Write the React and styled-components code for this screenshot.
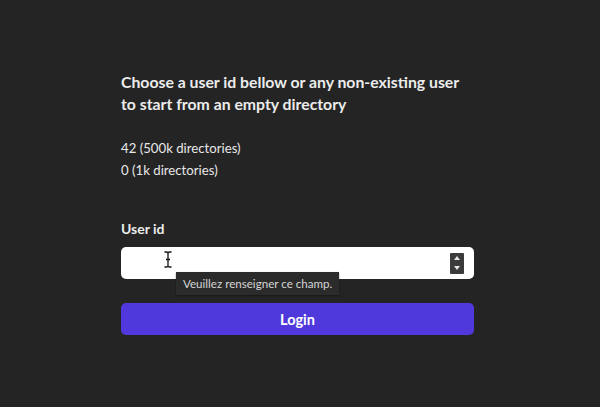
import React from "react";
import styled, { createGlobalStyle } from "styled-components";

const Global = createGlobalStyle`
  html, body {
    margin: 0;
    padding: 0;
    background: #242424;
  }
  body {
    font-family: Lato, "Noto Sans", sans-serif;
    color: #e6e6e6;
  }
`;

const Page = styled.div`
  width: 600px;
  height: 407px;
  overflow: hidden;
  background: #242424;
  padding-top: 71px;
  box-sizing: border-box;
`;

const Panel = styled.div`
  width: 353px;
  margin-left: 121px;
  display: flex;
  flex-direction: column;
`;

const Title = styled.h2`
  margin: 0;
  font-size: 15.8px;
  line-height: 22px;
  font-weight: 700;
  color: #ececec;
  white-space: nowrap;
`;

const UserList = styled.ul`
  list-style: none;
  margin: 22px 0 0;
  padding: 0;
  font-size: 13.2px;
  line-height: 22px;
  color: #e8e8e8;
`;

const Form = styled.form`
  margin-top: 38px;
  display: flex;
  flex-direction: column;
`;

const Label = styled.label`
  font-size: 14px;
  line-height: 20px;
  font-weight: 700;
  color: #ececec;
`;

const InputWrap = styled.div`
  position: relative;
  margin-top: 8px;
  height: 32px;
  background: #fff;
  border-radius: 5px;
  display: flex;
  align-items: center;
  justify-content: flex-end;
  padding-right: 10px;
`;

const Spinner = styled.div`
  width: 14px;
  height: 21px;
  background: #3b3b3b;
  border-radius: 1px;
  display: flex;
  flex-direction: column;
  align-items: center;
  justify-content: space-around;
`;

const Caret = styled.div`
  width: 0;
  height: 0;
  border-left: 3.5px solid transparent;
  border-right: 3.5px solid transparent;
  ${(p) =>
    p.$up
      ? "border-bottom: 4px solid #e6e6e6;"
      : "border-top: 4px solid #e6e6e6;"}
`;

const Cursor = styled.svg`
  position: absolute;
  left: 42px;
  top: 4px;
`;

const Tooltip = styled.div`
  position: absolute;
  left: 55px;
  top: 25px;
  background: #2b2b2b;
  color: #d6d6d6;
  font-family: Lato, sans-serif;
  font-size: 11.6px;
  line-height: 23px;
  padding: 0 7px;
  white-space: nowrap;
  box-shadow: 0 1px 2px rgba(0, 0, 0, 0.4);
`;

const Button = styled.button`
  margin-top: 24px;
  height: 32px;
  border: none;
  border-radius: 5px;
  background: #4f39dc;
  color: #fff;
  font-family: inherit;
  font-size: 14.5px;
  font-weight: 700;
`;

export default function App() {
  return (
    <>
      <Global />
      <Page>
        <Panel>
          <Title>
            Choose a user id bellow or any non-existing user
            <br />
            to start from an empty directory
          </Title>
          <UserList>
            <li>42 (500k directories)</li>
            <li>0 (1k directories)</li>
          </UserList>
          <Form onSubmit={(e) => e.preventDefault()}>
            <Label>User id</Label>
            <InputWrap>
              <Cursor width="10" height="17" viewBox="0 0 10 17">
                <path
                  d="M1.5 1h2q1.5 0 1.5 1.5V14.5q0 1.5 1.5 1.5h2M8.5 1h-2q-1.5 0 -1.5 1.5M5 14.5q0 1.5 -1.5 1.5H1.5M3 8.5h4"
                  stroke="#111"
                  strokeWidth="1.3"
                  fill="none"
                />
              </Cursor>
              <Spinner>
                <Caret $up />
                <Caret />
              </Spinner>
              <Tooltip>Veuillez renseigner ce champ.</Tooltip>
            </InputWrap>
            <Button type="submit">Login</Button>
          </Form>
        </Panel>
      </Page>
    </>
  );
}
